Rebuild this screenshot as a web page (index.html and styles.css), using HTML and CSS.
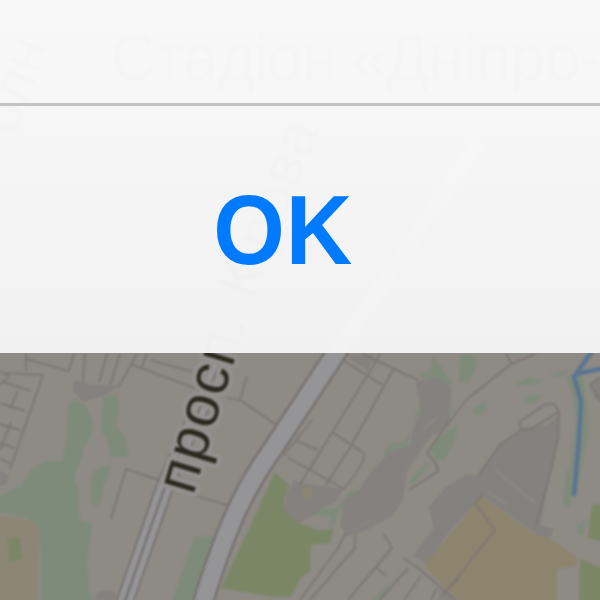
FILE: index.html
```html
<!DOCTYPE html>
<html lang="uk">
<head>
<meta charset="utf-8">
<title>Map</title>
<link rel="stylesheet" href="styles.css">
</head>
<body>
<main class="screen">
<svg class="map" viewBox="0 0 600 600" aria-hidden="true">
  <rect class="land" x="-10" y="-10" width="620" height="620"/>
  <!-- parks -->
  <g class="park">
    <path d="M68 404L75 399L88 408L93 425L91 436L84 447L82 459L75 474L75 482L79 490L78 510L82 522L92 522L91 535L87 563L92 610H42L40 530L28 518L-9 511V500L20 486L32 469L45 461L63 461L66 440Z"/>
    <path d="M103 396L117 394L119 410L116 426L126 438L129 457L111 458L108 441L101 429Z"/>
    <path d="M94 471L112 463L103 488L100 504L92 506L90 485Z"/>
    <path d="M194 537L214 536L193 610H169Z"/>
    <path d="M433 356L447 376L454 383L448 387L437 378L422 379L419 373L430 371ZM423 398L413 421L405 442L391 442L384 453L386 462L368 487L350 492L336 508L315 508L309 514L331 517L330 532L340 510L361 494L377 480L407 453L410 425L425 411Z"/>
    <path d="M460 354L477 356L475 370L468 384L459 382ZM440 365L448 380L440 381ZM474 408L486 401L486 411L478 416L473 413ZM448 407L455 410L447 415ZM459 423L454 442L445 460L436 459L430 449L438 438ZM412 476L429 462L424 473L410 487ZM515 384L530 377L542 381L536 385L518 386ZM525 397L544 394L535 403L525 404ZM549 374L571 369L559 377ZM390 583L402 563L392 580L381 600H372Z"/>
    <path d="M565 376L581 371L587 405L588 435L579 477L568 508L563 505L566 473L570 468L576 425L573 394Z"/>
    <path d="M578 525L587 520L582 537L577 534Z"/>
  </g>
  <!-- built-up blocks -->
  <g class="block">
    <path d="M74 380L93 385L119 386L107 394L91 399L83 402L73 390ZM97 592L112 590L120 600H95ZM0 471L9 476L6 485L0 486Z"/>
    <path d="M347 356L374 354L368 371ZM416 382L438 377L452 390L449 411L450 425L430 437L407 471L403 500L392 516L362 532L347 536L340 525L344 500L360 490L368 475L388 454L410 446L413 427L422 412Z"/>
    <path d="M294 480L306 484L343 489L335 503L324 506L313 515L296 525L285 515L286 496Z"/>
    <path d="M429 507L446 487L466 475L479 475L501 444L522 428L548 425L558 415L558 437L551 470L540 525L554 529L549 542L530 530L483 496L449 532L427 564L413 556L434 528Z"/>
    <path d="M590 385L610 373V415L594 396Z"/>
  </g>
  <path class="soft" d="M370 520L361 526M423 429L438 417M495 470L535 503M486 490L507 505"/>
  <!-- fields and meadow -->
  <path class="field" d="M424 566L482 496L532 533L550 538L577 558V610H470L458 600Z"/>
  <path class="land" d="M557 569L578 565V610H556Z"/>
  <path class="field pale" d="M-9 515Q37 516 40 532L37 610H-9Z"/>
  <path class="meadow" d="M7 538L20 537L22 559L10 562ZM275 472L289 485L284 500L286 513L296 522L318 530L333 529L330 543L311 545L310 571L300 579L291 597L268 596L221 588L247 533ZM592 505L610 503V543L588 538ZM580 558L610 573V610H579Z"/>
  <path class="dune" d="M302 486L314 488L311 502L302 498Z"/>
  <path class="block" d="M440 590Q450 591 457 600H438Z"/>
  <!-- minor streets -->
  <g class="street">
    <path d="M0 371L9 376L0 385M26 353V371M26 359L69 371L74 353M85 353L83 382M107 354L99 382M120 354L110 385M137 354L118 388M6 373L43 375L10 469M3 382L31 391M18 391L10 409M0 403L25 411M11 422L0 450M0 424L20 430M0 443L15 448M0 459L10 463"/>
    <path d="M130 364L200 390M147 353L142 367M150 360L197 373M126 469L159 480M126 469L111 519M193 495L230 506M227 398L240 400L277 425M247 376L240 400"/>
    <path d="M343 360L382 385M380 354L369 373L300 484M394 368L351 446L326 485M332 432L364 453Q367 460 344 489M332 432L310 469M295 440L318 450M287 457L344 489M363 354L418 380M284 455L312 420"/>
    <path d="M346 533L338 548L300 600M355 535L355 548L310 600M383 533L392 548L348 600M375 567L387 576M403 558L418 568L456 600M408 568L380 600M421 576L404 600M437 588L431 600M460 577L445 592"/>
    <path d="M536 354L511 364L466 400L440 434L427 453L436 463L438 471L409 490M506 354L512 364M519 422L521 430L531 429L559 412L554 404H546L519 422M559 412L558 438L551 470L536 525M483 493L475 503L495 530L443 595M600 400L590 385L600 377M522 430L500 444L478 476"/>
  </g>
  <!-- main roads -->
  <path class="casing rail" d="M225 353C205 400 176 455 163 492L124 604"/>
  <path class="road rail" d="M225 353C205 400 176 455 163 492L124 604"/>
  <path class="median" d="M225 353C205 400 176 455 163 492L124 604"/>
  <path class="casing avenue" d="M480 140L336 353L272 450C242 492 224 534 202 606"/>
  <path class="road avenue" d="M480 140L336 353L272 450C242 492 224 534 202 606"/>
  <path class="river" d="M593 350L574 377L581 401L579 440L574 496M576 374L604 368"/>
  <!-- labels -->
  <path id="avenue-line" fill="none" d="M193 496L252 303L325 115L360 20"/>
  <text class="label"><textPath href="#avenue-line" textLength="388">просп. Кірова</textPath></text>
  <text class="label" transform="translate(15 138) rotate(-70)">олн</text>
  <text class="label place" x="110" y="80" textLength="227">Стадіон</text>
  <text class="label place" x="351" y="80" textLength="250">«Дніпро-</text>
</svg>
<section class="dialog">
  <div class="message"></div>
  <button class="confirm"><span class="caption">OK</span></button>
</section>
</main>
</body>
</html>
```

FILE: styles.css
```css
body {
  margin: 0;
  font-family: "Liberation Sans", Arial, sans-serif;
}

.screen {
  display: grid;
  width: 600px;
  height: 600px;
  overflow: hidden;
}

/* The map and the dialog share one grid cell. */
.map,
.dialog {
  grid-area: 1 / 1;
}

.map {
  width: 600px;
  height: 600px;
  overflow: visible;
  filter: blur(0.8px);
}

.land { fill: #8e8a84; }
.park { fill: #7f8b7a; }
.block { fill: #84817e; }
.field { fill: #8d846d; }
.pale { fill: #8d8676; }
.meadow { fill: #7b8667; }
.dune { fill: #898572; }

.soft {
  fill: none;
  stroke: #8b8883;
  stroke-width: 2.5;
}

.street {
  fill: none;
  stroke: #7c7773;
  stroke-width: 2;
  stroke-linejoin: round;
}

.casing,
.road,
.median,
.river {
  fill: none;
}

.casing { stroke: #75706d; }
.road { stroke: #959598; }
.casing.avenue { stroke-width: 22; }
.road.avenue { stroke-width: 17.5; }
.casing.rail { stroke-width: 18; }
.road.rail { stroke-width: 14.5; }

.median {
  stroke: #777370;
  stroke-width: 2.5;
}

.river {
  stroke: #5a7592;
  stroke-width: 4.5;
}

.label {
  fill: #2b281f;
  stroke: #93908e;
  stroke-width: 9;
  stroke-linejoin: round;
  paint-order: stroke;
  font-size: 59px;
}

.place { font-size: 64px; }

.dialog {
  position: relative;
  display: flex;
  flex-direction: column;
  height: 353px;
  background: linear-gradient(rgb(251 251 251 / 0.975), rgb(245 244 245 / 0.975));
}

.message {
  height: 103px;
  border-bottom: 3px solid #c3c3c3;
}

.confirm {
  display: flex;
  flex: 1;
  align-items: center;
  justify-content: center;
  padding: 0 34px 1px 0;
  border: 0;
  background: none;
  color: #007aff;
  font: bold 99px/1 "Liberation Sans", Arial, sans-serif;
}

.caption {
  transform: scaleX(0.93);
  letter-spacing: 1px;
}
```
